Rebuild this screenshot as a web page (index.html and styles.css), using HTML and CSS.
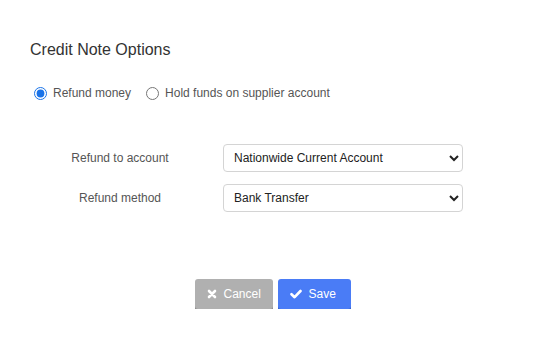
FILE: index.html
```html
<!DOCTYPE html>
<html lang="en">

<head>
    <meta charset="UTF-8">
    <meta name="viewport" content="width=device-width, initial-scale=1.0">
    <title>Credit Note Options</title>
    <link rel="stylesheet" href="styles.css">
</head>

<body>
    <div class="dialog">
        <h2 class="dialog-title">Credit Note Options</h2>

        <div class="radio-row">
            <label class="radio-option">
                <input type="radio" name="refund-mode" value="refund" checked>
                <span>Refund money</span>
            </label>
            <label class="radio-option">
                <input type="radio" name="refund-mode" value="hold">
                <span>Hold funds on supplier account</span>
            </label>
        </div>

        <div class="form-rows">
            <div class="form-row">
                <label class="form-label" for="refund-account">Refund to account</label>
                <select id="refund-account" class="form-select">
                    <option>Nationwide Current Account</option>
                    <option>Petty Cash</option>
                </select>
            </div>
            <div class="form-row">
                <label class="form-label" for="refund-method">Refund method</label>
                <select id="refund-method" class="form-select">
                    <option>Bank Transfer</option>
                    <option>Cheque</option>
                    <option>Cash</option>
                </select>
            </div>
        </div>

        <div class="actions">
            <button class="btn btn-cancel" type="button">
                <svg class="btn-icon" viewBox="0 0 10 10" width="10" height="10">
                    <path d="M2 2 L8 8 M8 2 L2 8" stroke="currentColor" stroke-width="2.6" stroke-linecap="round" fill="none" />
                </svg>
                Cancel
            </button>
            <button class="btn btn-save" type="button">
                <svg class="btn-icon" viewBox="0 0 12 10" width="12" height="10">
                    <path d="M1.5 5.2 L4.6 8.2 L10.5 2" stroke="currentColor" stroke-width="2.6" stroke-linecap="round" stroke-linejoin="round" fill="none" />
                </svg>
                Save
            </button>
        </div>
    </div>
</body>

</html>
```

FILE: styles.css
```css
body {
    margin: 0;
    font-family: 'Liberation Sans', Arial, sans-serif;
    background-color: #ffffff;
    color: #555555;
}

.dialog {
    width: 551px;
    padding: 40px 0 0 30px;
    box-sizing: border-box;
}

.dialog-title {
    margin: 0;
    font-size: 16px;
    font-weight: normal;
    line-height: 20px;
    color: #333333;
}

.radio-row {
    display: flex;
    align-items: center;
    gap: 15px;
    margin: 26px 0 0 4px;
}

.radio-option {
    display: flex;
    align-items: center;
    font-size: 12px;
    color: #555555;
}

.radio-option input {
    width: 13px;
    height: 13px;
    margin: 0 6px 0 0;
    accent-color: #1a73e8;
}

.form-rows {
    display: flex;
    flex-direction: column;
    gap: 12px;
    margin-top: 44px;
}

.form-row {
    display: flex;
    align-items: center;
}

.form-label {
    width: 180px;
    text-align: center;
    font-size: 12px;
    color: #555555;
}

.form-select {
    width: 240px;
    height: 28px;
    margin-left: 13px;
    padding: 0 6px;
    font-family: inherit;
    font-size: 12px;
    color: #222222;
    background-color: #ffffff;
    border: 1px solid #d4d4d4;
    border-radius: 4px;
}

.actions {
    display: flex;
    justify-content: center;
    gap: 5px;
    margin: 67px 0 0 -36px;
}

.btn {
    display: flex;
    align-items: center;
    gap: 7px;
    height: 30px;
    padding: 0 12px;
    font-family: inherit;
    font-size: 12px;
    color: #ffffff;
    border: none;
    border-radius: 3px;
    cursor: pointer;
}

.btn-cancel {
    width: 78px;
    background-color: #b0b0b0;
    box-shadow: 0 2px 0 #8c8c8c;
}

.btn-save {
    width: 73px;
    background-color: #4a7cf6;
    box-shadow: 0 2px 0 #3560c8;
}

.btn-icon {
    flex-shrink: 0;
}
```
